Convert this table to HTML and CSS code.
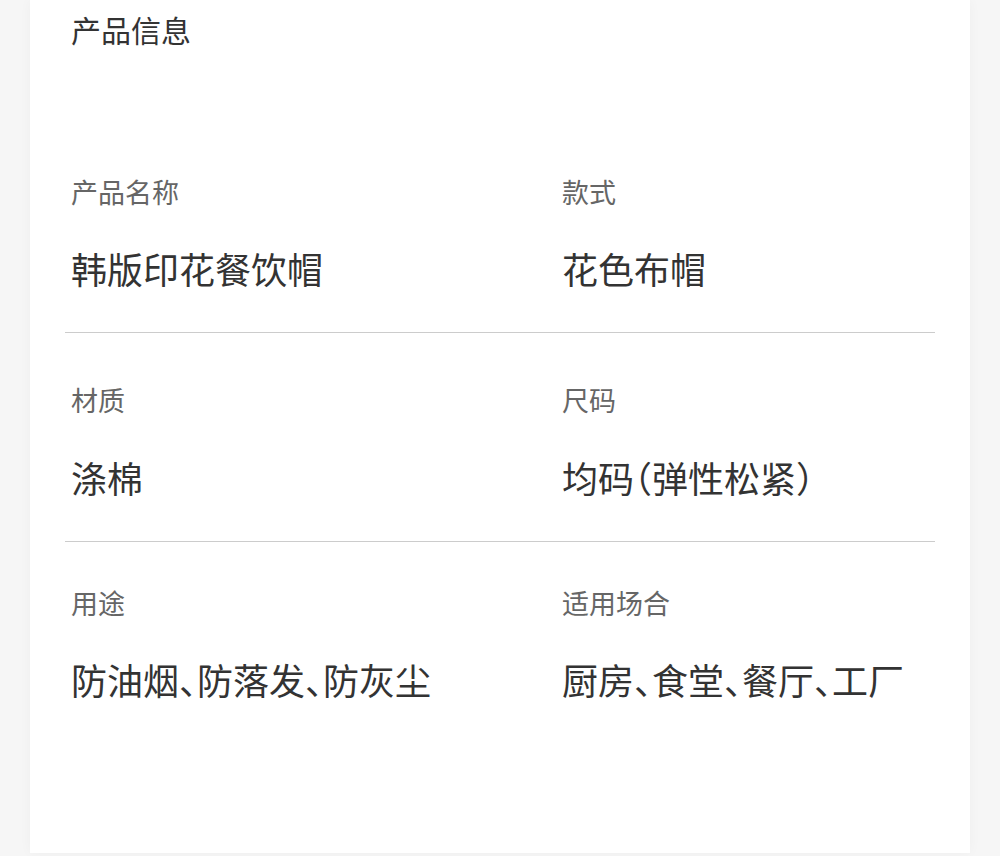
FILE: index.html
```html
<!DOCTYPE html>
<html lang="zh-CN">
<head>
<meta charset="utf-8">
<link rel="stylesheet" href="styles.css">
</head>
<body>
<div class="page">
  <div class="card">
    <h1 class="title">产品信息</h1>
    <div class="specs">
      <div class="row row-first">
        <div class="cell">
          <div class="label">产品名称</div>
          <div class="value">韩版印花餐饮帽</div>
        </div>
        <div class="cell">
          <div class="label">款式</div>
          <div class="value">花色布帽</div>
        </div>
      </div>
      <div class="row row-second">
        <div class="cell">
          <div class="label">材质</div>
          <div class="value">涤棉</div>
        </div>
        <div class="cell">
          <div class="label">尺码</div>
          <div class="value">均码（弹性松紧）</div>
        </div>
      </div>
      <div class="row row-last">
        <div class="cell">
          <div class="label">用途</div>
          <div class="value">防油烟、防落发、防灰尘</div>
        </div>
        <div class="cell">
          <div class="label">适用场合</div>
          <div class="value">厨房、食堂、餐厅、工厂</div>
        </div>
      </div>
    </div>
  </div>
</div>
</body>
</html>
```

FILE: styles.css
```css
html, body {
  margin: 0;
  padding: 0;
}
body {
  background: #f6f6f6;
  font-family: "Noto Sans CJK SC", "Noto Sans", sans-serif;
  font-feature-settings: "halt";
  width: 1000px;
  height: 856px;
  overflow: hidden;
}
.page {
  padding: 0 30px;
}
.card {
  background: #ffffff;
  height: 853px;
  box-shadow: 0 0 12px rgba(0, 0, 0, 0.035);
  box-sizing: border-box;
  padding: 9px 35px 0 35px;
}
.title {
  margin: 0;
  padding-left: 6px;
  font-size: 30px;
  font-weight: 400;
  line-height: 40px;
  color: #333333;
}
.specs {
  margin-top: 123px;
}
.row {
  display: grid;
  grid-template-columns: 491px 1fr;
  padding: 0 6px;
}
.row-first {
  border-bottom: 1px solid #cccccc;
  padding-top: 0;
  padding-bottom: 39px;
}
.row-second {
  border-bottom: 1px solid #cccccc;
  padding-top: 47px;
  padding-bottom: 39px;
}
.row-last {
  padding-top: 41px;
}
.label {
  font-size: 27px;
  line-height: 40px;
  color: #666666;
}
.value {
  margin-top: 31px;
  font-size: 36px;
  line-height: 50px;
  color: #333333;
}
.row-second .value {
  margin-top: 32px;
}
```
